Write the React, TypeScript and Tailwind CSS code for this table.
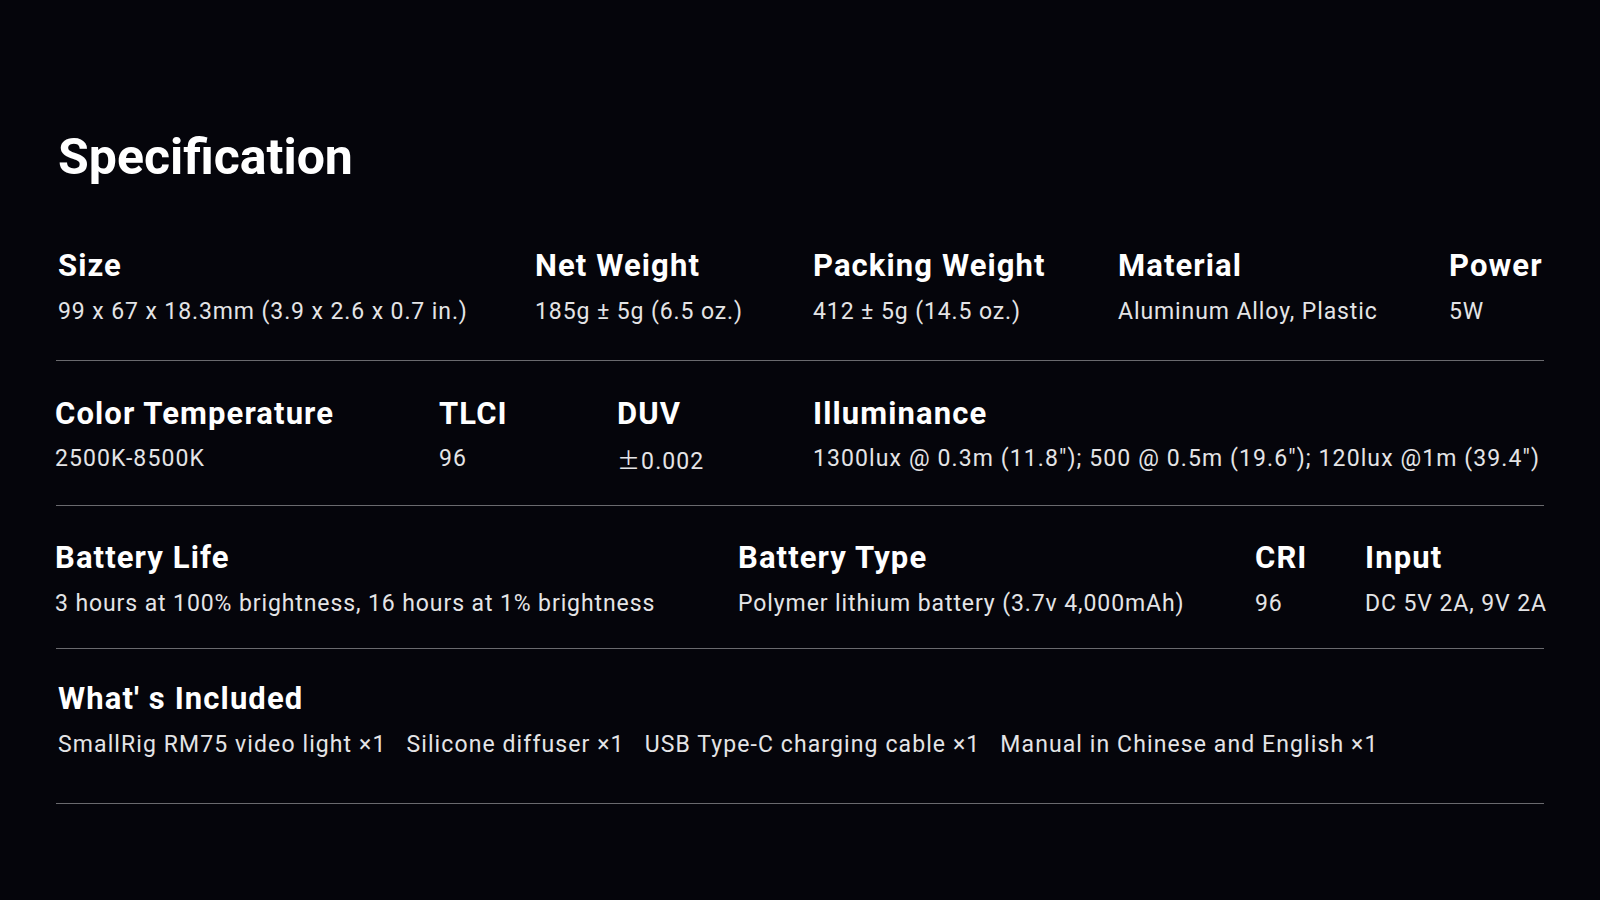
const font = { fontFamily: 'Roboto, "Noto Sans", sans-serif' }

type Cell = { label: string; value: React.ReactNode; key: string }

const rows: { cols: string; cells: Cell[]; pt: string; pb: string; gap: string; track: string }[] = [
  {
    cols: 'grid-cols-[477px_278px_305px_331px_1fr] pl-[2px]',
    pt: 'pt-[66px]',
    pb: 'pb-[34px]',
    gap: 'mt-[14px]',
    track: 'tracking-[0.9px]',
    cells: [
      { key: 'size', label: 'Size', value: '99 x 67 x 18.3mm (3.9 x 2.6 x 0.7 in.)' },
      { key: 'net', label: 'Net Weight', value: '185g ± 5g (6.5 oz.)' },
      { key: 'pack', label: 'Packing Weight', value: '412 ± 5g (14.5 oz.)' },
      { key: 'mat', label: 'Material', value: 'Aluminum Alloy, Plastic' },
      { key: 'pow', label: 'Power', value: '5W' },
    ],
  },
  {
    cols: 'grid-cols-[384px_178px_196px_1fr] -ml-[1px]',
    pt: 'pt-[35px]',
    pb: 'pb-[32px]',
    gap: 'mt-[13px]',
    track: 'tracking-[1.1px]',
    cells: [
      { key: 'ct', label: 'Color Temperature', value: '2500K-8500K' },
      { key: 'tlci', label: 'TLCI', value: '96' },
      {
        key: 'duv',
        label: 'DUV',
        value: (
          <>
            <span style={{ fontFamily: '"Noto Sans CJK SC", sans-serif' }}>±</span>0.002
          </>
        ),
      },
      { key: 'ill', label: 'Illuminance', value: '1300lux @ 0.3m (11.8"); 500 @ 0.5m (19.6"); 120lux @1m (39.4")' },
    ],
  },
  {
    cols: 'grid-cols-[683px_517px_110px_1fr] -ml-[1px]',
    pt: 'pt-[34px]',
    pb: 'pb-[30px]',
    gap: 'mt-[14px]',
    track: 'tracking-[0.9px]',
    cells: [
      { key: 'bl', label: 'Battery Life', value: '3 hours at 100% brightness, 16 hours at 1% brightness' },
      { key: 'bt', label: 'Battery Type', value: 'Polymer lithium battery (3.7v 4,000mAh)' },
      { key: 'cri', label: 'CRI', value: '96' },
      { key: 'in', label: 'Input', value: 'DC 5V 2A, 9V 2A' },
    ],
  },
]

const included = [
  'SmallRig RM75 video light ×1',
  'Silicone diffuser ×1',
  'USB Type-C charging cable ×1',
  'Manual in Chinese and English ×1',
]

export default function App() {
  return (
    <div className="min-h-[900px] w-full bg-[#05050b] px-[56px] pt-[132px]" style={font}>
      <h1 className="ml-[2px] text-[50px] leading-[50px] font-bold text-white">Specification</h1>

      {rows.map((row, i) => (
        <div key={i} className={`${row.pt} ${row.pb} border-b border-[#6a6a6e]`}>
          <div className={`grid ${row.cols}`}>
            {row.cells.map((c) => (
              <div key={c.key} className="whitespace-nowrap">
                <div className="text-[31px] leading-[36px] font-bold tracking-[1.1px] text-white">{c.label}</div>
                <div className={`${row.gap} ${row.track} h-[28px] text-[23px] leading-[28px] text-[#e4e4e6]`}>
                  {c.value}
                </div>
              </div>
            ))}
          </div>
        </div>
      ))}

      {/* What's included */}
      <div className="pt-[32px] pb-[44px] border-b border-[#6a6a6e] pl-[2px]">
        <div className="text-[31px] leading-[36px] font-bold tracking-[1.1px] text-white">What' s Included</div>
        <div className="mt-[14px] flex gap-[20px] text-[23px] leading-[28px] tracking-[1.1px] text-[#e4e4e6] whitespace-nowrap">
          {included.map((item) => (
            <span key={item}>{item}</span>
          ))}
        </div>
      </div>
    </div>
  )
}
